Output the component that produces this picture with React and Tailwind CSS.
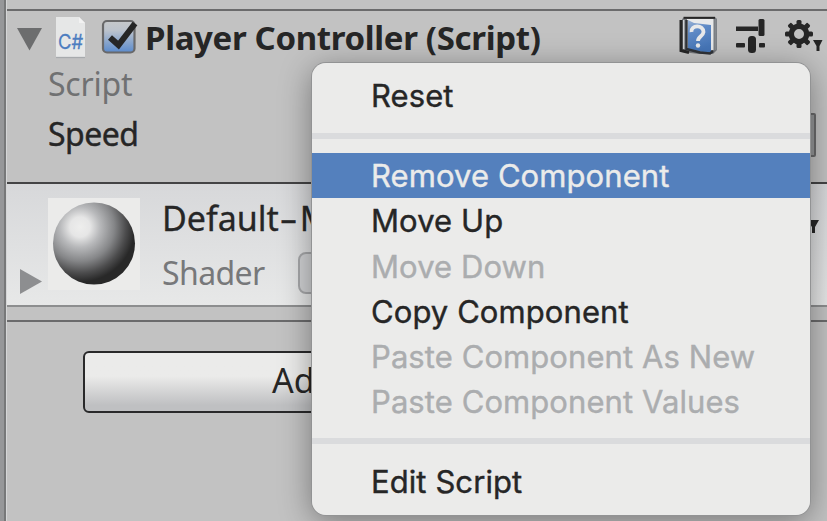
import React from "react";

function HelpBook() {
  return (
    <svg className="block h-[42px] w-[40px]" viewBox="0 0 40 42">
      <defs>
        <linearGradient id="cover" x1="0" y1="0" x2="0.300" y2="1">
          <stop offset="0" stopColor="#9db4d4" />
          <stop offset="0.400" stopColor="#5f8ac6" />
          <stop offset="1" stopColor="#4676b8" />
        </linearGradient>
      </defs>
      <path d="M3 3 L6 1 H36 L38 3 V34 L34 38 H20 L3 36Z" fill="#75787c" />
      <path d="M2 4 V34.500 L10 36.500" fill="none" stroke="#262626" strokeWidth="3" />
      <path d="M4.500 1.800 H36" stroke="#262626" strokeWidth="2" />
      <path d="M4.700 4 V33" stroke="#d5d8dc" strokeWidth="1.300" />
      <path d="M8 3 H34.500 V34 H30 L8 33Z" fill="#e8e9ea" />
      <path d="M9 4 L15 7 L32 9 V36 L24 36 L9 33Z" fill="url(#cover)" />
      <path d="M7.500 4 V33 L21 36.500 L31 37.500 L34 35" fill="none" stroke="#303338" strokeWidth="2.400" />
      <path d="M36.500 3 V34" stroke="#85898e" strokeWidth="2" />
      <path d="M12.500 16 C11.500 9 24.500 8 24.500 16 C24 20.500 19 20 19 25" fill="none" stroke="#e8e9ea" strokeWidth="3.800" />
      <circle cx="19" cy="29.500" r="2.200" fill="#e8e9ea" />
    </svg>
  );
}

function Presets() {
  return (
    <svg className="block h-[36px] w-[30px]" viewBox="0 0 30 36" fill="#262626">
      <rect x="0" y="8.500" width="22" height="4.500" />
      <rect x="22.500" y="1" width="6" height="17" rx="1.500" />
      <rect x="0" y="25" width="9" height="4.500" rx="1" />
      <rect x="12" y="18" width="8" height="17" rx="3.500" />
      <rect x="23" y="25" width="6" height="4.500" rx="1" />
    </svg>
  );
}

const TEETH = [0, 45, 90, 135, 180, 225, 270, 315];

function Gear() {
  return (
    <svg className="block h-[36px] w-[38px]" viewBox="0 0 38 36" fill="#262626">
      <circle cx="14" cy="15" r="7.700" fill="none" stroke="#262626" strokeWidth="5.400" />
      {TEETH.map((a) => (
        <rect key={a} x="11.500" y="1" width="5" height="6" rx="1.500" transform={`rotate(${a} 14 15)`} />
      ))}
      <path d="M28 21 H37.500 L34.500 27 V32 H31.500 V27Z" />
    </svg>
  );
}

function ScriptFile() {
  return (
    <svg className="block h-[43px] w-[30px]" viewBox="0 0 30 43">
      <path d="M0 1 H23 L29 7 V41 H0Z" fill="#e6e7e7" />
      <path d="M23 1 V7 H29Z" fill="#f2f2f2" />
      <path d="M0 41.500 H29" stroke="#a7aaad" strokeWidth="1.300" />
      <text x="2" y="33" fontFamily="Inter, sans-serif" fontSize="20" textLength="25" lengthAdjust="spacingAndGlyphs" fill="#4d7dc0" stroke="#4d7dc0" strokeWidth="0.300">C#</text>
    </svg>
  );
}

function Checkbox() {
  return (
    <svg className="block h-[36px] w-[38px]" viewBox="0 0 38 36">
      <defs>
        <linearGradient id="tick" x1="0" y1="0" x2="0" y2="1">
          <stop offset="0" stopColor="#c6c8ca" />
          <stop offset="0.300" stopColor="#bcc3cc" />
          <stop offset="1" stopColor="#5b8bcd" />
        </linearGradient>
      </defs>
      <rect x="2" y="2" width="31.500" height="31.500" rx="4" fill="url(#tick)" stroke="#69696a" strokeWidth="2.200" />
      <path d="M9 18.500 L17.500 26 L34 4.500" fill="none" stroke="#262626" strokeWidth="6" />
    </svg>
  );
}

function Sphere() {
  return (
    <svg className="block size-[92px]" viewBox="0 0 92 92">
      <defs>
        <radialGradient id="ball" gradientUnits="userSpaceOnUse" cx="32" cy="29" r="59">
          <stop offset="0" stopColor="#eeeeed" />
          <stop offset="0.170" stopColor="#e6e6e6" />
          <stop offset="0.340" stopColor="#b8b9bb" />
          <stop offset="0.580" stopColor="#858688" />
          <stop offset="0.780" stopColor="#4c4c4d" />
          <stop offset="0.930" stopColor="#282828" />
        </radialGradient>
      </defs>
      <rect width="92" height="92" fill="#ebebea" />
      <circle cx="46" cy="45.500" r="41" fill="url(#ball)" />
    </svg>
  );
}

function Item({ children, tone = "text-[#262626]", className = "" }) {
  return (
    <div className={`h-[45.250px] pl-[59px] leading-[46px] ${tone} ${className}`}>
      <span className="tracking-[0.080px] [-webkit-text-stroke:0.4px_currentColor]">{children}</span>
    </div>
  );
}

function ContextMenu() {
  return (
    <div className="absolute left-[312px] top-[63px] h-[452px] w-[498px] overflow-hidden rounded-[14px] bg-[#ebebea] pt-[10px] font-['Inter',sans-serif] text-[31px] whitespace-nowrap">
      <Item>Reset</Item>
      <div className="mt-[14.750px] h-[6px] bg-[#dadbdd]" />
      <Item className="mt-[14px] bg-[#5480bd]" tone="text-[#ebebea]">Remove Component</Item>
      <Item>Move Up</Item>
      <Item tone="text-[#abadaf]">Move Down</Item>
      <Item>Copy Component</Item>
      <Item tone="text-[#abadaf]">Paste Component As New</Item>
      <Item tone="text-[#abadaf]">Paste Component Values</Item>
      <div className="mt-[13.500px] h-[6px] bg-[#dadbdd]" />
      <Item className="mt-[14.500px]">Edit Script</Item>
    </div>
  );
}

export default function App() {
  return (
    <div className="relative flex h-[521px] w-[827px] overflow-hidden bg-[#c2c2c2] font-['Noto_Sans',sans-serif] text-[32px] whitespace-nowrap text-[#262626]">
      <div className="w-[6px] shrink-0 border-r-2 border-[#777879] bg-[#969799]" />
      <main className="flex w-[821px] flex-col border-l border-[#d5d6d7]">
        <div className="h-[11px] shrink-0 border-b-2 border-[#6b6b6c]" />
        <section className="flex h-[171px] shrink-0 flex-col">
          <div className="flex h-[52px] pt-[5px]">
            <svg className="ml-[10px] mt-[12px] block h-[24px] w-[26px]" viewBox="0 0 26 24">
              <path d="M0 0 H25 L12.500 22.500Z" fill="#6c6d6e" />
            </svg>
            <div className="ml-[13px]"><ScriptFile /></div>
            <div className="ml-[15px] mt-[3px]"><Checkbox /></div>
            <span className="ml-[6px] w-[534px] text-[33px] leading-[44px] font-bold tracking-[-0.340px]">Player Controller (Script)</span>
            <HelpBook />
            <div className="ml-[17px] mt-[2px]"><Presets /></div>
            <div className="ml-[19px] mt-[3px]"><Gear /></div>
          </div>
          <div className="pl-[41px] leading-[42px] tracking-[-0.200px] text-[#707172]">Script</div>
          <div className="mt-[8px] flex justify-between pl-[41px] leading-[42px]">
            <span className="tracking-[-0.550px] [-webkit-text-stroke:0.4px_currentColor]">Speed</span>
            <div className="mr-[11px] h-[44px] w-[500px] rounded-xs border-2 border-[#6b6b6c] bg-[#969799]" />
          </div>
        </section>
        <section className="flex h-[125px] shrink-0 border-y-2 border-t-[#444445] border-b-[#8d8e8f] bg-linear-to-b from-[#d7d8da] to-[#e7e8e8]">
          <svg className="ml-[13px] mt-[85px] block h-[26px] w-[23px] shrink-0" viewBox="0 0 23 26">
            <path d="M0 0 L22 12.500 L0 25Z" fill="#8d8e90" />
          </svg>
          <div className="ml-[5px] mt-[14px] shrink-0"><Sphere /></div>
          <div className="ml-[22px] w-[640px] shrink-0 pt-[13px]">
            <div className="flex justify-between text-[34px] leading-[43px]">
              <span className="[-webkit-text-stroke:0.3px_currentColor]">
                Default<span className="mr-[6px] ml-[4px] inline-block scale-x-165">-</span>M
              </span>
              <svg className="mt-[23px] mr-[-17px] block h-[14px] w-[12px]" viewBox="0 0 12 14">
                <path d="M0 0 H12 L8 7 V13 H5 V7Z" fill="#262626" />
              </svg>
            </div>
            <div className="mt-[12px] flex text-[#77787a]">
              <span className="w-[136px] leading-[42px] tracking-[-0.600px]">Shader</span>
              <div className="h-[42px] w-[480px] rounded-lg border-2 border-[#a7a8aa] bg-[#d1d2d4]" />
            </div>
          </div>
        </section>
        <div className="h-[15px] shrink-0 border-b-2 border-[#6b6b6c]" />
        <div className="ml-[76px] mt-[29px] flex h-[62px] w-[659px] shrink-0 rounded-md border-2 border-[#29292a] bg-linear-to-b from-[#ebebea] from-40% to-[#bfc0c2] to-90% pl-[187px] text-[34px] leading-[55px]">
          Ad
        </div>
      </main>
      <div className="absolute left-[312px] top-[63px] h-[452px] w-[498px] rounded-[14px] shadow-[0_0_0_1px_#929394,0_6px_32px_rgba(0,0,0,0.4)]" />
      <ContextMenu />
    </div>
  );
}
